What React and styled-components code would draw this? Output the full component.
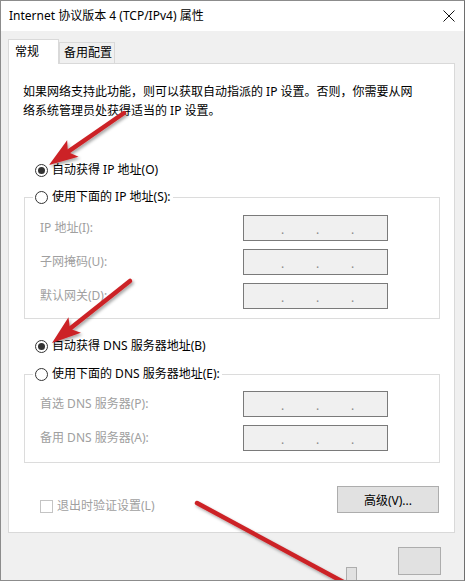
import React from 'react'
import styled, { createGlobalStyle } from 'styled-components'

const GlobalStyle = createGlobalStyle`
  html, body {
    margin: 0;
    padding: 0;
    background: #ffffff;
  }
  body {
    font-family: "Noto Sans", "Noto Sans CJK SC", sans-serif;
    font-size: 12px;
    line-height: 18px;
    color: #000;
  }
`

const Window = styled.div`
  position: relative;
  box-sizing: border-box;
  width: 465px;
  height: 581px;
  border: 1px solid #8c8c8c;
  border-right-color: #6e6e6e;
  background: #f0f0f0;
  overflow: hidden;
`

const TitleBar = styled.div`
  height: 30px;
  background: #ffffff;
  display: flex;
  align-items: center;
  justify-content: space-between;
  padding: 0 9px 0 8px;
  font-size: 12px;
`

const Body = styled.div`
  padding: 8px 7px 0 7px;
`

const TabRow = styled.div`
  display: flex;
  align-items: flex-end;
  height: 24px;
`

const Tab = styled.div`
  box-sizing: border-box;
  border: 1px solid #d9d9d9;
  border-bottom: none;
  display: flex;
  align-items: center;
  position: relative;
  width: ${p => (p.$active ? '51px' : '56px')};
  height: ${p => (p.$active ? '25px' : '21px')};
  margin-bottom: ${p => (p.$active ? '-1px' : '0')};
  padding-left: ${p => (p.$active ? '6px' : '4px')};
  background: ${p => (p.$active ? '#ffffff' : '#f0f0f0')};
  z-index: ${p => (p.$active ? 2 : 0)};
`

const Panel = styled.div`
  box-sizing: border-box;
  width: 447px;
  background: #ffffff;
  border: 1px solid #d9d9d9;
  padding: 18px 14px 17px 15px;
`

const Intro = styled.p`
  margin: 0 0 0 -1px;
  line-height: 19px;
`

const RadioRow = styled.label`
  display: flex;
  align-items: center;
  gap: 4px;
  height: 18px;
  margin-top: ${p => p.$top || 0}px;
  padding-left: ${p => (p.$inLegend ? 2 : 11)}px;
  padding-right: 2px;
`

const RadioCircle = styled.span`
  box-sizing: border-box;
  width: 13px;
  height: 13px;
  border-radius: 50%;
  border: 1px solid #333;
  background: #fff;
  display: flex;
  align-items: center;
  justify-content: center;
  flex: none;

  &::after {
    content: '';
    width: 7px;
    height: 7px;
    border-radius: 50%;
    background: ${p => (p.$checked ? '#333' : 'transparent')};
  }
`

const Group = styled.fieldset`
  margin: ${p => p.$top}px 0 0 0;
  padding: 0;
  border: 1px solid #dcdcdc;
  min-inline-size: 0;
`

const Legend = styled.legend`
  margin-left: 8px;
  padding: 0;
`

const FieldGrid = styled.div`
  display: grid;
  grid-template-columns: 203px 145px;
  row-gap: 8px;
  padding: ${p => p.$pt}px 0 ${p => p.$pb}px 15px;
`

const FieldLabel = styled.span`
  color: #a0a0a0;
  display: flex;
  align-items: center;
`

const IpField = styled.div`
  box-sizing: border-box;
  height: 26px;
  border: 1px solid #7a7a7a;
  background: #f0f0f0;
  display: flex;
  align-items: center;
  padding-left: 21px;
`

const Dot = styled.span`
  width: 35px;
  text-align: center;
  color: #8a8a8a;
  font-size: 12px;
  line-height: 12px;
  padding-top: 3px;
`

const BottomRow = styled.div`
  display: flex;
  justify-content: space-between;
  align-items: flex-start;
  margin-top: 23px;
  padding-left: 16px;
  padding-right: 1px;
`

const CheckLabel = styled.label`
  display: flex;
  align-items: center;
  gap: 4px;
  color: #a0a0a0;
  margin-top: 11px;
`

const CheckBox = styled.span`
  box-sizing: border-box;
  width: 13px;
  height: 13px;
  border: 1px solid #c4c4c4;
  background: #fff;
`

const Button = styled.button`
  box-sizing: border-box;
  width: ${p => p.$w || 102}px;
  height: ${p => p.$h || 27}px;
  background: #e1e1e1;
  border: 1px solid #adadad;
  font-family: inherit;
  font-size: 12px;
  color: #000;
  padding: 0;
  margin-top: ${p => p.$top || 0}px;
`

const Footer = styled.div`
  height: 48px;
  display: flex;
  justify-content: flex-end;
  align-items: flex-start;
  gap: 41px;
  padding: 14px 23px 0 0;
  box-sizing: border-box;
`

const Annotations = styled.svg`
  position: absolute;
  left: -1px;
  top: -1px;
  pointer-events: none;
`

const ipRows = ['IP 地址(I):', '子网掩码(U):', '默认网关(D):']
const dnsRows = ['首选 DNS 服务器(P):', '备用 DNS 服务器(A):']

function Field() {
  return (
    <IpField>
      <Dot>.</Dot>
      <Dot>.</Dot>
      <Dot>.</Dot>
    </IpField>
  )
}

function CloseIcon() {
  return (
    <svg width="12" height="12" viewBox="0 0 12 12">
      <path d="M0.5 0.5 L11.5 11.5 M11.5 0.5 L0.5 11.5" stroke="#111" strokeWidth="1" />
    </svg>
  )
}

// red annotation arrow drawn over the dialog
function Arrow({ x1, y1, x2, y2, head = true }) {
  const dx = x2 - x1
  const dy = y2 - y1
  const len = Math.hypot(dx, dy)
  const ux = dx / len
  const uy = dy / len
  const bx = x2 - ux * 29
  const by = y2 - uy * 29
  const px = -uy
  const py = ux
  const pts = `${x2},${y2} ${bx + px * 10},${by + py * 10} ${bx + ux * 6},${by + uy * 6} ${bx - px * 10},${by - py * 10}`
  return (
    <g filter="url(#shadow)">
      <line x1={x1} y1={y1} x2={head ? bx + ux * 7 : x2} y2={head ? by + uy * 7 : y2} stroke="#cc2428" strokeWidth="4.5" strokeLinecap="round" />
      {head && <polygon points={pts} fill="#cc2428" />}
    </g>
  )
}

export default function App() {
  return (
    <>
      <GlobalStyle />
      <Window>
        <TitleBar>
          <span>Internet 协议版本 4 (TCP/IPv4) 属性</span>
          <CloseIcon />
        </TitleBar>
        <Body>
          <TabRow>
            <Tab $active>常规</Tab>
            <Tab>备用配置</Tab>
          </TabRow>
          <Panel>
            <Intro>
              如果网络支持此功能，则可以获取自动指派的 IP 设置。否则，你需要从网
              <br />
              络系统管理员处获得适当的 IP 设置。
            </Intro>

            <RadioRow $top={41}>
              <RadioCircle $checked />
              自动获得 IP 地址(O)
            </RadioRow>
            <Group $top={9}>
              <Legend>
                <RadioRow $inLegend>
                  <RadioCircle />
                  使用下面的 IP 地址(S):
                </RadioRow>
              </Legend>
              <FieldGrid $pt={9} $pb={9}>
                {ipRows.map(label => (
                  <React.Fragment key={label}>
                    <FieldLabel>{label}</FieldLabel>
                    <Field />
                  </React.Fragment>
                ))}
              </FieldGrid>
            </Group>

            <RadioRow $top={18}>
              <RadioCircle $checked />
              自动获得 DNS 服务器地址(B)
            </RadioRow>
            <Group $top={10}>
              <Legend>
                <RadioRow $inLegend>
                  <RadioCircle />
                  使用下面的 DNS 服务器地址(E):
                </RadioRow>
              </Legend>
              <FieldGrid $pt={8} $pb={11}>
                {dnsRows.map(label => (
                  <React.Fragment key={label}>
                    <FieldLabel>{label}</FieldLabel>
                    <Field />
                  </React.Fragment>
                ))}
              </FieldGrid>
            </Group>

            <BottomRow>
              <CheckLabel>
                <CheckBox />
                退出时验证设置(L)
              </CheckLabel>
              <Button>高级(V)...</Button>
            </BottomRow>
          </Panel>
        </Body>
        <Footer>
          <Button $w={11} $h={15} $top={20} />
          <Button $w={43} $h={28} />
        </Footer>

        <Annotations width="465" height="581" viewBox="0 0 465 581">
          <defs>
            <filter id="shadow" x="-20%" y="-20%" width="140%" height="140%">
              <feDropShadow dx="1.5" dy="2" stdDeviation="1.5" floodColor="#000" floodOpacity="0.35" />
            </filter>
          </defs>
          <Arrow x1={124} y1={113} x2={49} y2={165} />
          <Arrow x1={130} y1={281} x2={52} y2={343} />
          <Arrow x1={197} y1={503} x2={347} y2={584} head={false} />
        </Annotations>
      </Window>
    </>
  )
}
